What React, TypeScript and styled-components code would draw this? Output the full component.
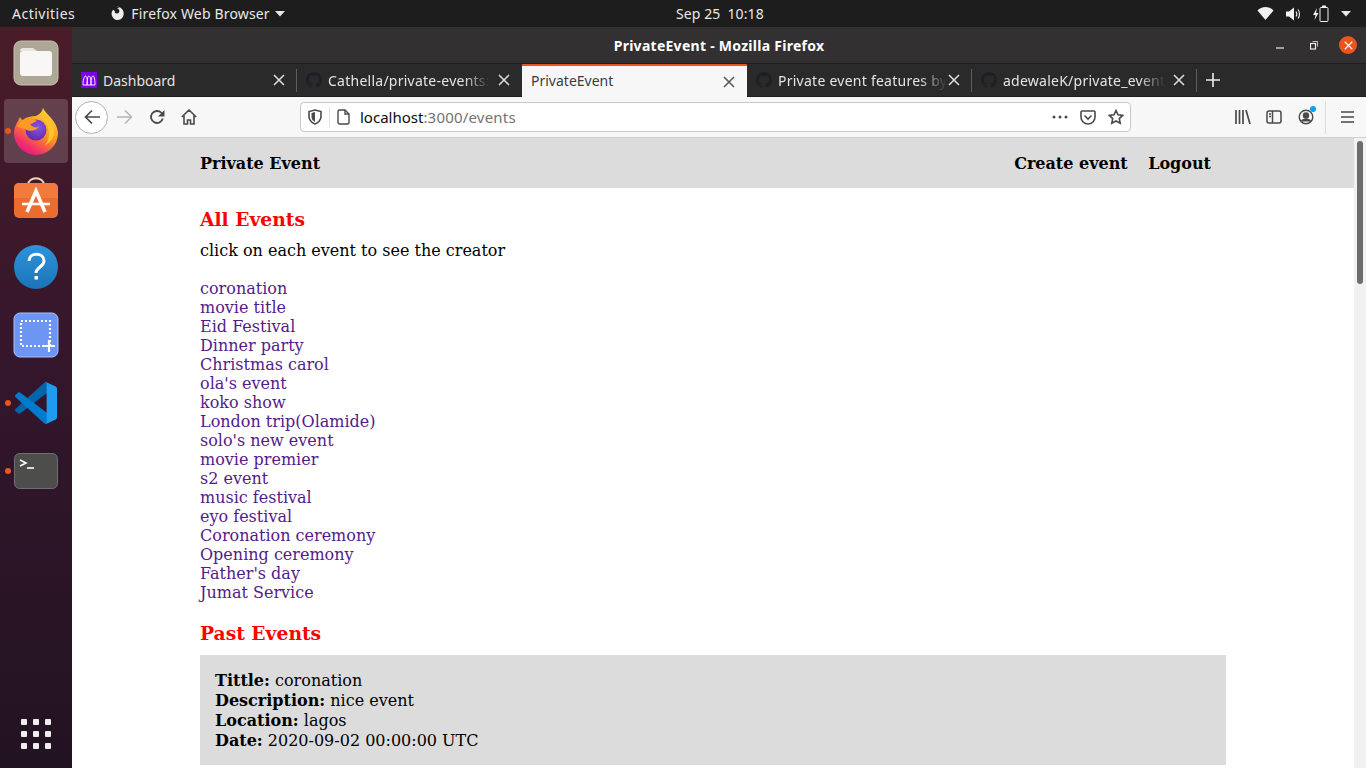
import React from "react";
import styled, { createGlobalStyle } from "styled-components";

const Global = createGlobalStyle`
  html, body { margin: 0; padding: 0; width: 1366px; height: 768px; overflow: hidden; background: #fff; }
  * { box-sizing: border-box; }
`;
const UI = `"Noto Sans", "Open Sans", sans-serif`;
const Screen = styled.div`
  width: 1366px; height: 768px; display: grid;
  grid-template-rows: 27px 1fr; grid-template-columns: 72px 1fr; overflow: hidden;
`;
const TopBar = styled.header`
  grid-column: 1 / 3; background: #1d1d1d; color: #e8e8e8; font: 400 14px ${UI};
  display: grid; grid-template-columns: 664px auto 1fr; align-items: center; padding: 0 15px 0 12px;
`;
const TopLeft = styled.div`display: flex; align-items: center; gap: 34px;`;
const Activities = styled.span`letter-spacing: .5px;`;
const AppMenu = styled.div`display: flex; align-items: center; gap: 5px; letter-spacing: .16px;`;
const TopRight = styled.div`display: flex; align-items: center; justify-content: flex-end; gap: 12px;`;
const Clock = styled.div`display: flex; gap: 7px; letter-spacing: .1px;`;
const Dock = styled.aside`
  background: linear-gradient(180deg, #4a1c28 0%, #34162c 45%, #221322 100%);
  display: flex; flex-direction: column; align-items: center; padding-top: 2px; position: relative;
`;
const DockItem = styled.div<{ $active?: boolean; $running?: boolean }>`
  width: 64px; height: 64px; margin: 2px 0; border-radius: 4px; display: flex; align-items: center; justify-content: center;
  position: relative; background: ${p => (p.$active ? "rgba(255,255,255,.17)" : "transparent")};
  &::before {
    content: ""; display: ${p => (p.$running ? "block" : "none")}; position: absolute; left: 1px; top: 50%; margin-top: -3px;
    width: 6px; height: 6px; border-radius: 50%; background: #e95420;
  }
`;
const DockGrid = styled.div`position: absolute; bottom: 19px; left: 21px; display: grid; grid-template-columns: repeat(3, 6px); gap: 6px;`;
const Dot = styled.i`display: block; width: 6px; height: 6px; border-radius: 1px; background: #eeeeee;`;
const Browser = styled.main`display: flex; flex-direction: column; min-width: 0; height: 741px; overflow: hidden;`;
const TitleBar = styled.div`
  height: 37px; background: #323031; color: #fff; font: 700 14px ${UI}; letter-spacing: .27px; position: relative;
  display: flex; align-items: center; justify-content: center; padding-top: 1px; border-bottom: 1px solid #1f1e1f;
`;
const WinButtons = styled.div`position: absolute; right: 9px; top: 9px; display: flex; align-items: center;`;
const RestoreIcon = styled.span`display: flex; margin-left: 26px;`;
const CloseBtn = styled.div`width: 18px; height: 18px; border-radius: 50%; background: #e95420; display: flex; align-items: center; justify-content: center; margin-left: 21px;`;
const TabBar = styled.div`height: 33px; background: #2b2a2b; display: flex; border-bottom: 1px solid #1f1e1f; color: #e4e4e4; font: 400 14px ${UI};`;
const Tab = styled.div<{ $active?: boolean; $w: number; $sep?: boolean }>`
  width: ${p => p.$w}px; flex: none; height: ${p => (p.$active ? 33 : 32)}px; display: flex; align-items: center; position: relative; padding-left: 9px;
  ${p => p.$active && "background:#f7f7f8;color:#3c3c3c;border-top:2px solid #e95420;padding-bottom:2px;"}
  ${p => p.$sep && `&::after{content:"";position:absolute;right:0;top:5px;height:23px;width:1px;background:#5e5d5e;}`}
`;
const TabIcon = styled.span`width: 16px; height: 16px; flex: none; margin-right: 6px; display: flex;`;
const TabLabel = styled.span`
  white-space: nowrap; flex: none; letter-spacing: .25px;
  -webkit-mask-image: linear-gradient(90deg, #000 84%, transparent);
  mask-image: linear-gradient(90deg, #000 84%, transparent);
`;
const TabClose = styled.span`position: absolute; right: 12px; top: 50%; margin-top: -6px; display: flex;`;
const NewTab = styled.div`width: 32px; height: 32px; display: flex; align-items: center; justify-content: center;`;
const NavBar = styled.div`height: 41px; background: #f7f7f8; border-bottom: 1px solid #cfcfd0; display: flex; align-items: center; padding-left: 3px; position: relative;`;
const BackCircle = styled.div`width: 33px; height: 33px; border-radius: 50%; border: 1px solid #b1b1b2; background: #fff; display: flex; align-items: center; justify-content: center;`;
const NavIcon = styled.div<{ $ml?: number }>`margin-left: ${p => p.$ml ?? 0}px; display: flex; width: 16px; height: 16px;`;
const UrlBar = styled.div`
  position: absolute; left: 228px; top: 5px; width: 831px; height: 30px; background: #fff; border: 1px solid #c9c9ca; border-radius: 4px;
  display: flex; align-items: center; font: 400 15px ${UI}; color: #0c0c0d; padding-left: 7px;
`;
const UrlSep = styled.span`width: 1px; height: 20px; background: #dedede; margin: 0 7px;`;
const PageIcon = styled.span`display: flex; margin-right: 10px;`;
const UrlGrey = styled.span`color: #737373; letter-spacing: .2px;`;
const UrlRight = styled.div`margin-left: auto; display: flex; align-items: center; gap: 12px; padding-right: 6px;`;
const ToolIcons = styled.div`position: absolute; right: 0; top: 0; height: 40px; display: flex; align-items: center;`;
const ToolIcon = styled.div<{ $mr: number }>`margin-right: ${p => p.$mr}px; display: flex; position: relative;`;
const Badge = styled.i`position: absolute; right: -2px; top: -3px; width: 6px; height: 6px; border-radius: 50%; background: #0a9fe8;`;
const ToolSep = styled.span`width: 1px; height: 33px; background: #dcdcdc; margin-right: 15px;`;
const View = styled.div`flex: 1; min-height: 0; display: flex; position: relative; overflow: hidden; font-family: "DejaVu Serif", serif; color: #000; background: #fff;`;
const Page = styled.div`flex: 1; min-width: 0;`;
const SiteNav = styled.nav`height: 50px; background: #dcdcdc; padding: 0 143px 0 128px; display: flex; align-items: center; font-weight: 700; font-size: 16px; justify-content: space-between;`;
const NavLinks = styled.div`display: flex; gap: 20.5px;`;
const Content = styled.div`padding: 20px 128px 0; width: 1282px;`;
const H2 = styled.h2`margin: 0; color: #ff0000; font-size: 18.72px; line-height: 23px; font-weight: 700;`;
const Intro = styled.p`margin: 10px 0 19px; font-size: 16px; line-height: 19px;`;
const EventList = styled.div`display: flex; flex-direction: column; margin-bottom: 20px;`;
const EventLink = styled.a`color: #551a8b; font-size: 16px; line-height: 19px; text-decoration: none;`;
const Card = styled.section`margin-top: 10px; background: #dcdcdc; padding: 16px 15px 0; font-size: 16px; line-height: 20px; height: 110px; width: 1026px;`;
const Row = styled.div`white-space: nowrap;`;
const Track = styled.div`width: 12px; background: #f1f1f2; flex: none; position: relative;`;
const Thumb = styled.div`position: absolute; left: 3px; top: 3px; width: 6px; height: 143px; border-radius: 3px; background: #6d6d6d;`;

const Github = ({ c = "#1b2127" }: { c?: string }) => (
  <svg width="16" height="16" viewBox="0 0 16 16" fill={c}><path d="M8 0C3.58 0 0 3.58 0 8c0 3.54 2.29 6.53 5.47 7.59.4.07.55-.17.55-.38 0-.19-.01-.82-.01-1.49-2.01.37-2.53-.49-2.69-.94-.09-.23-.48-.94-.82-1.13-.28-.15-.68-.52-.01-.53.63-.01 1.08.58 1.23.82.72 1.21 1.87.87 2.33.66.07-.52.28-.87.51-1.07-1.78-.2-3.64-.89-3.64-3.95 0-.87.31-1.59.82-2.15-.08-.2-.36-1.02.08-2.12 0 0 .67-.21 2.2.82.64-.18 1.32-.27 2-.27s1.36.09 2 .27c1.53-1.04 2.2-.82 2.2-.82.44 1.1.16 1.92.08 2.12.51.56.82 1.27.82 2.15 0 3.07-1.87 3.75-3.65 3.95.29.25.54.73.54 1.48 0 1.07-.01 1.93-.01 2.2 0 .21.15.46.55.38A8.01 8.01 0 0 0 16 8c0-4.42-3.58-8-8-8z"/></svg>
);
const X = ({ c = "#e0e0e0", s = 12 }: { c?: string; s?: number }) => (
  <svg width={s} height={s} viewBox="0 0 12 12" stroke={c} strokeWidth="1.5" fill="none"><path d="M1 1l10 10M11 1L1 11"/></svg>
);
const Caret = () => <svg width="10" height="6" viewBox="0 0 10 6" fill="#e8e8e8"><path d="M0 0h10L5 5.5z"/></svg>;

const events = ["coronation","movie title","Eid Festival","Dinner party","Christmas carol","ola's event","koko show","London trip(Olamide)","solo's new event","movie premier","s2 event","music festival","eyo festival","Coronation ceremony","Opening ceremony","Father's day","Jumat Service"];

export default function App() {
  return (
    <Screen>
      <Global />
      <TopBar>
        <TopLeft>
          <Activities>Activities</Activities>
          <AppMenu>
            <svg width="17" height="17" viewBox="0 0 17 17"><path fill="#eee" d="M8.5 1.5c-.4 0-.8 0-1.2.1 1.7.2 3 .9 3.5 1.9-1-.7-2.2-.5-2.7-.2 1.6.3 2.5 1.7 2.2 3.3-.2 1.200-1.200 2.100-2.500 2-1.500 0-2.300-1.300-2-2.500L4.300 4.700C2.900 6 2.300 7.800 2.700 9.700c.6 3.100 3.100 5.300 6 5.300 3.400 0 6-2.900 6-6.500 0-3.300-2.200-6-6.200-7z"/><circle cx="8.300" cy="6.500" r="1.300" fill="#1d1d1d"/></svg>
            <span>Firefox Web Browser</span>
            <Caret />
          </AppMenu>
        </TopLeft>
        <Clock><span>Sep 25</span><span>10:18</span></Clock>
        <TopRight>
          <svg width="17" height="13" viewBox="0 0 16 13" fill="#f2f2f2"><path d="M8 13L0 3.500C2 1.300 4.900 0 8 0s6 1.300 8 3.500z"/></svg>
          <svg width="15" height="14" viewBox="0 0 15 14" fill="none"><path fill="#f2f2f2" d="M0 4.500h3L8 .5v13l-5-4H0z"/><path stroke="#f2f2f2" strokeWidth="1.100" d="M10 4.500c1 1.400 1 3.600 0 5M12 2.500c2 2.400 2 6.600 0 9"/></svg>
          <svg width="16" height="17" viewBox="0 0 16 17" fill="none"><path fill="#f2f2f2" d="M4 3L0 10h2.500L1.500 15 5.500 8H3z"/><rect x="7" y="2.500" width="8" height="14" rx="1" stroke="#f2f2f2"/><rect x="9" y="0.500" width="4" height="2" fill="#f2f2f2"/></svg>
          <Caret />
        </TopRight>
      </TopBar>
      <Dock>
        <DockItem>
          <svg width="46" height="46" viewBox="0 0 46 46"><rect x="1" y="1" width="44" height="44" rx="7" fill="#aea795" stroke="#c8c3b4"/><path fill="#e9e5df" d="M7 11a3 3 0 0 1 3-3h10l4 3H7z"/><rect x="7" y="11" width="32" height="25" rx="3" fill="#f8f7f5"/></svg>
        </DockItem>
        <DockItem $active $running>
          <svg width="46" height="48" viewBox="0 0 46 48">
            <defs>
              <linearGradient id="ff1" x1="0.850" y1="0" x2="0.250" y2="1"><stop offset="0" stopColor="#ffe03a"/><stop offset=".5" stopColor="#ff9020"/><stop offset=".82" stopColor="#f0316b"/><stop offset="1" stopColor="#e31587"/></linearGradient>
              <radialGradient id="ff2" cx=".6" cy=".35" r=".7"><stop offset="0" stopColor="#8a55e0"/><stop offset="1" stopColor="#5b2aa8"/></radialGradient>
            </defs>
            <path fill="url(#ff1)" d="M30 1C33 8 44 13 45 26A22 22 0 0 1 1 26C1 21 3 17 5 14L7 10C8 12 9 13 10 13C13 10 18 9 23 9C27 7 29 5 30 1z"/>
            <circle cx="23" cy="23" r="10.500" fill="url(#ff2)"/>
            <path fill="#ffc32e" d="M28 10C36 11 41 17 41 25C41 31 37 36 32 38C36 33 37 27 35 21C34 16 31 13 28 10z"/>
            <path fill="#ff9a2a" d="M4 20C7 13 14 10 19 11L24 14C21 15 19 17 17 17C19 20 23 21 26 20C23 24 16 25 12 22C9 21 6 20 4 20z"/>
          </svg>
        </DockItem>
        <DockItem>
          <svg width="46" height="46" viewBox="0 0 46 46"><path fill="none" stroke="#f0d9b8" strokeWidth="1.800" d="M15 9c0-9 16-9 16 0"/><rect x="1" y="7" width="44" height="35" rx="5" fill="#ec6c30"/><path d="M1 12a5 5 0 0 1 5-5h34a5 5 0 0 1 5 5v10H1z" fill="#f27a3c"/><path fill="none" stroke="#fff" strokeWidth="3.600" d="M14 36l9-21 9 21"/><path fill="none" stroke="#fff" strokeWidth="2.600" d="M9 28h28"/></svg>
        </DockItem>
        <DockItem>
          <svg width="46" height="46" viewBox="0 0 46 46"><defs><linearGradient id="h1" x1="0" y1="0" x2="0" y2="1"><stop offset="0" stopColor="#2e93dc"/><stop offset="1" stopColor="#1a74b8"/></linearGradient></defs><circle cx="23" cy="23" r="22" fill="url(#h1)"/><path d="M16 17c0-9 15-9 15 0 0 6-8 6-8 12" fill="none" stroke="#fff" strokeWidth="3"/><rect x="21.500" y="32" width="3.500" height="3.500" fill="#fff"/></svg>
        </DockItem>
        <DockItem>
          <svg width="46" height="46" viewBox="0 0 46 46"><rect x="1" y="1" width="44" height="44" rx="6" fill="#6d95f4" stroke="#a9c0f8"/><rect x="8" y="9" width="29" height="25" fill="none" stroke="#fff" strokeWidth="2.200" strokeDasharray="2 2"/><path stroke="#fff" strokeWidth="2.200" d="M36 28v12M30 34h12"/></svg>
        </DockItem>
        <DockItem $running>
          <svg width="42" height="42" viewBox="0 0 100 100">
            <path fill="#0065a9" d="M96.500 10.800 75.900.9C73.500-.2 70.700.3 68.800 2.200L1.400 63.600c-1.800 1.600-1.800 4.500 0 6.100l5.500 5c1.500 1.300 3.700 1.400 5.300.2L93.300 13.200c2.700-2.100 6.700-.1 6.700 3.300v-.2c0-2.400-1.400-4.600-3.500-5.500z"/>
            <path fill="#007acc" d="M96.500 89.200 75.900 99.100c-2.400 1.100-5.200.6-7.100-1.300L1.400 36.400c-1.800-1.600-1.800-4.500 0-6.100l5.500-5c1.500-1.300 3.700-1.400 5.300-.2l81.100 61.500c2.700 2.100 6.700.1 6.700-3.300v.2c0 2.400-1.400 4.600-3.500 5.700z"/>
            <path fill="#1f9cf0" d="M75.900 99.100c-2.100 1-4.500.6-6.200-1.100 2.100 2.100 5.600.6 5.600-2.300V4.300c0-2.900-3.500-4.400-5.600-2.300 1.700-1.700 4.100-2.100 6.200-1.100L96.500 10.800c2.200 1 3.500 3.200 3.500 5.600v67.200c0 2.400-1.400 4.600-3.500 5.600z"/>
          </svg>
        </DockItem>
        <DockItem $running>
          <svg width="44" height="36" viewBox="0 0 44 36"><rect x=".5" y=".5" width="43" height="35" rx="5" fill="#4d4d4c" stroke="#6e6e6c"/><path d="M6 7l6 3-6 3" fill="none" stroke="#fff" strokeWidth="1.600"/><path d="M13 15h7" stroke="#fff" strokeWidth="1.600"/></svg>
        </DockItem>
        <DockGrid>{Array.from({ length: 9 }).map((_, i) => <Dot key={i} />)}</DockGrid>
      </Dock>
      <Browser>
        <TitleBar>
          PrivateEvent - Mozilla Firefox
          <WinButtons>
            <svg width="8" height="8" viewBox="0 0 8 8"><path d="M0 7h8" stroke="#eee" strokeWidth="1.200"/></svg>
            <RestoreIcon><svg width="8" height="9" viewBox="0 0 8 9" fill="none" stroke="#eee"><rect x=".5" y="2.500" width="5" height="5.500" strokeWidth="1.200"/><path d="M2.500 .5h5v5" strokeWidth=".8"/></svg></RestoreIcon>
            <CloseBtn><X c="#fff" s={9} /></CloseBtn>
          </WinButtons>
        </TitleBar>
        <TabBar>
          <Tab $w={225} $sep>
            <TabIcon><svg width="16" height="16" viewBox="0 0 16 16"><rect width="16" height="16" fill="#7d00ea"/><path d="M2 13c0-4 1-9 2.500-9S7 9 6 13M6 13c0-4 .5-9 2-9s2.500 5 2 9M10 13c-.5-4 .5-9 2-9s2 5 2 9M2 13h12" fill="none" stroke="#fff" strokeWidth=".9"/></svg></TabIcon>
            <span>Dashboard</span>
            <TabClose><X /></TabClose>
          </Tab>
          <Tab $w={225}>
            <TabIcon><Github /></TabIcon>
            <TabLabel>Cathella/private-events:</TabLabel>
            <TabClose><X /></TabClose>
          </Tab>
          <Tab $active $w={225}>
            <span>PrivateEvent</span>
            <TabClose><X c="#555" /></TabClose>
          </Tab>
          <Tab $w={225} $sep>
            <TabIcon><Github /></TabIcon>
            <TabLabel>Private event features by</TabLabel>
            <TabClose><X /></TabClose>
          </Tab>
          <Tab $w={225} $sep>
            <TabIcon><Github /></TabIcon>
            <TabLabel>adewaleK/private_event</TabLabel>
            <TabClose><X /></TabClose>
          </Tab>
          <NewTab><svg width="14" height="14" viewBox="0 0 14 14"><path d="M7 0v14M0 7h14" stroke="#eee" strokeWidth="1.600"/></svg></NewTab>
        </TabBar>
        <NavBar>
          <BackCircle><svg width="16" height="16" viewBox="0 0 16 16" fill="none" stroke="#4a4a4b" strokeWidth="1.700"><path d="M16 8H1.500M8 1.500L1.500 8 8 14.500"/></svg></BackCircle>
          <NavIcon $ml={9}><svg width="16" height="16" viewBox="0 0 16 16" fill="none" stroke="#b5b5b6" strokeWidth="1.500"><path d="M0 8h14.500M8 1.500L14.500 8 8 14.500"/></svg></NavIcon>
          <NavIcon $ml={16}><svg width="16" height="16" viewBox="0 0 16 16" fill="none"><path stroke="#4a4a4b" strokeWidth="1.800" d="M13.800 9.500A6 6 0 1 1 12.200 3.700L14 5.500"/><path fill="#4a4a4b" d="M15.500 1v6.500H9z"/></svg></NavIcon>
          <NavIcon $ml={16}><svg width="16" height="16" viewBox="0 0 16 16" fill="none" stroke="#4a4a4b" strokeWidth="1.600"><path d="M.8 8L8 1l7.200 7M3 6.500V15h3.500v-4h3v4H13V6.500"/></svg></NavIcon>
          <UrlBar>
            <svg width="14" height="16" viewBox="0 0 14 16" fill="none" stroke="#4a4a4b" strokeWidth="1.600"><path d="M7 1l6 1.500V8c0 3-3 6-6 7-3-1-6-4-6-7V2.500z"/><path d="M7 3v10c-2-1-3.500-3-3.500-5V4z" fill="#4a4a4b" stroke="none"/></svg>
            <UrlSep />
            <PageIcon><svg width="13" height="16" viewBox="0 0 13 16" fill="none" stroke="#4a4a4b" strokeWidth="1.400"><path d="M1 2.500A1.500 1.500 0 0 1 2.500 1H8l4 4v8.500a1.500 1.500 0 0 1-1.500 1.500h-8A1.500 1.500 0 0 1 1 13.500z"/><path d="M8 1v4h4"/></svg></PageIcon>
            <span>localhost</span><UrlGrey>:3000/events</UrlGrey>
            <UrlRight>
              <svg width="16" height="4" viewBox="0 0 16 4" fill="#4a4a4b"><circle cx="2" cy="2" r="1.500"/><circle cx="8" cy="2" r="1.500"/><circle cx="14" cy="2" r="1.500"/></svg>
              <svg width="16" height="15" viewBox="0 0 16 15" fill="none" stroke="#4a4a4b" strokeWidth="1.600"><path d="M2 1h12a1 1 0 0 1 1 1v5a7 7 0 0 1-14 0V2a1 1 0 0 1 1-1z"/><path d="M4.500 5.500L8 9l3.500-3.500"/></svg>
              <svg width="16" height="16" viewBox="0 0 16 16" fill="none" stroke="#4a4a4b" strokeWidth="1.600"><path d="M8 1.500l2 4.300 4.700.6-3.400 3.200.9 4.700L8 12l-4.200 2.300.9-4.700L1.300 6.400 6 5.800z"/></svg>
            </UrlRight>
          </UrlBar>
          <ToolIcons>
            <ToolIcon $mr={15}><svg width="16" height="14" viewBox="0 0 16 14" fill="none" stroke="#4a4a4b" strokeWidth="1.700"><path d="M1 0v14M4.500 0v14M8 0v14M11 0l4 14"/></svg></ToolIcon>
            <ToolIcon $mr={16}><svg width="16" height="14" viewBox="0 0 16 14" fill="none" stroke="#4a4a4b" strokeWidth="1.500"><rect x="1" y="1" width="14" height="12" rx="2"/><path d="M6.500 1v12M3 4h2M3 6.500h2"/></svg></ToolIcon>
            <ToolIcon $mr={11}><svg width="16" height="16" viewBox="0 0 16 16" fill="none" stroke="#4a4a4b" strokeWidth="1.400"><circle cx="8" cy="8" r="6.800"/><circle cx="8" cy="6.500" r="2.500" fill="#4a4a4b"/><path d="M3.500 12.500c1-3 8-3 9 0" fill="#4a4a4b"/></svg><Badge /></ToolIcon>
            <ToolSep />
            <ToolIcon $mr={12}><svg width="13" height="12" viewBox="0 0 13 12" stroke="#4a4a4b" strokeWidth="1.700"><path d="M0 1h13M0 6h13M0 11h13"/></svg></ToolIcon>
          </ToolIcons>
        </NavBar>
        <View>
          <Page>
            <SiteNav>
              <span>Private Event</span>
              <NavLinks><span>Create event</span><span>Logout</span></NavLinks>
            </SiteNav>
            <Content>
              <H2>All Events</H2>
              <Intro>click on each event to see the creator</Intro>
              <EventList>{events.map(e => <EventLink key={e} href="#">{e}</EventLink>)}</EventList>
              <H2>Past Events</H2>
              <Card>
                <Row><b>Tittle:</b> coronation</Row>
                <Row><b>Description:</b> nice event</Row>
                <Row><b>Location:</b> lagos</Row>
                <Row><b>Date:</b> 2020-09-02 00:00:00 UTC</Row>
              </Card>
            </Content>
          </Page>
          <Track><Thumb /></Track>
        </View>
      </Browser>
    </Screen>
  );
}
